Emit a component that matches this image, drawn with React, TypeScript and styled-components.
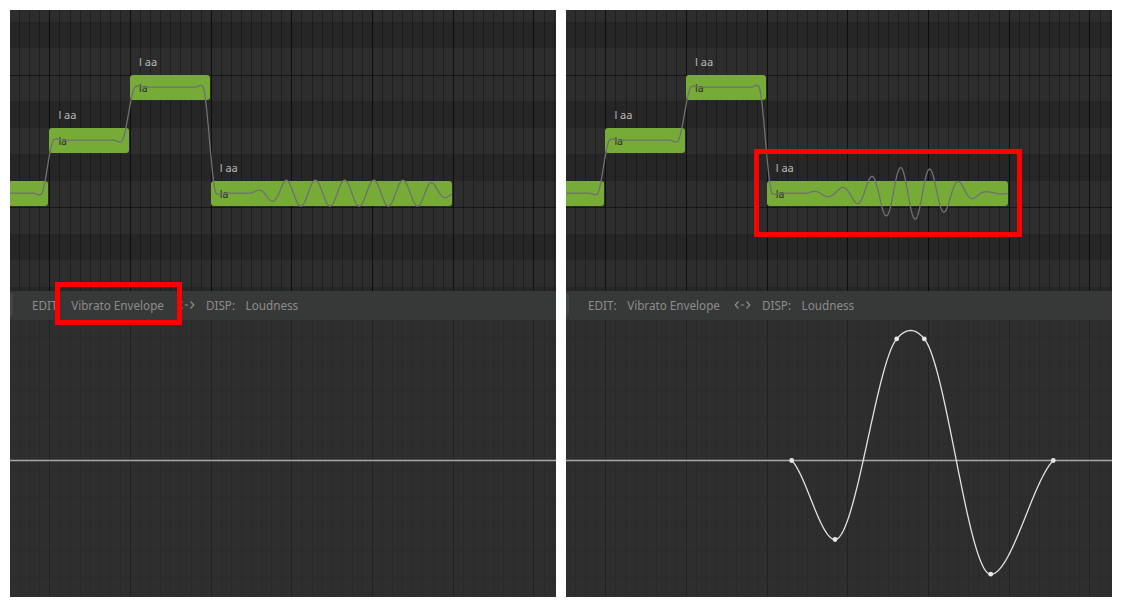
import React from "react";
import styled, { createGlobalStyle } from "styled-components";

const BEAT = 80.67;
const X0 = 39.4;
const MINOR = BEAT / 8;
const ROW_H = 26.5;
const FIRST_ROW_H = 11.7;

const GlobalStyle = createGlobalStyle`
  html, body { margin: 0; padding: 0; background: #ffffff; }
  body { font-family: "Noto Sans", "DejaVu Sans", sans-serif; }
`;

const Page = styled.div`
  display: flex;
  gap: 10px;
  padding: 10px;
  width: 1122px;
  height: 608px;
  box-sizing: border-box;
  background: #ffffff;
`;

const Panel = styled.section`
  position: relative;
  width: 546px;
  height: 587px;
  flex: none;
  display: flex;
  flex-direction: column;
  overflow: hidden;
  background: #2e2e2e;
`;

const Roll = styled.div`
  position: relative;
  height: 281px;
  flex: none;
  overflow: hidden;
`;

const Rows = styled.div`
  display: flex;
  flex-direction: column;
`;

const Row = styled.div<{ $dark?: boolean; $h: number; $octave?: boolean }>`
  height: ${(p) => p.$h}px;
  flex: none;
  box-sizing: border-box;
  background: ${(p) => (p.$dark ? "#262626" : "#2d2d2d")};
  border-top: ${(p) => (p.$octave ? "1px solid #161616" : "none")};
`;

const GridLines = styled.div<{ $major: string; $minor: string }>`
  position: absolute;
  inset: 0;
  pointer-events: none;
  background-image:
    repeating-linear-gradient(
      90deg,
      ${(p) => p.$major} ${X0 - BEAT}px,
      ${(p) => p.$major} ${X0 - BEAT + 1}px,
      transparent ${X0 - BEAT + 1}px,
      transparent ${X0}px
    ),
    repeating-linear-gradient(
      90deg,
      ${(p) => p.$minor} ${X0 - 4 * MINOR}px,
      ${(p) => p.$minor} ${X0 - 4 * MINOR + 1}px,
      transparent ${X0 - 4 * MINOR + 1}px,
      transparent ${X0 - 3 * MINOR}px
    );
`;

const Note = styled.div`
  position: absolute;
  height: 25px;
  box-sizing: border-box;
  padding: 2px 0 0 9px;
  background: #76ab37;
  border-radius: 3px;
  font-size: 10.5px;
  line-height: 23px;
  color: #2e2e2e;
  white-space: nowrap;
`;

const Lyric = styled.span`
  position: absolute;
  left: 9px;
  top: -19px;
  font-size: 11px;
  line-height: 12px;
  color: #b9b9b9;
  white-space: pre;
`;

const CurveLayer = styled.svg`
  position: absolute;
  left: 0;
  top: 0;
  pointer-events: none;
`;

const Toolbar = styled.div`
  height: 29px;
  flex: none;
  box-sizing: border-box;
  padding-bottom: 2px;
  display: flex;
  align-items: center;
  background: #373938;
  color: #8c8c8c;
  font-size: 11.7px;
  white-space: nowrap;
`;

const EdgeButton = styled.div`
  width: 3px;
  height: 23px;
  flex: none;
  margin-right: 19px;
  background: #434544;
  border-radius: 0 4px 4px 0;
`;

const Field = styled.div`
  display: flex;
  align-items: center;
  gap: 10.5px;
`;

const Swap = styled.svg`
  flex: none;
  margin: 0 11px 0 14px;
`;

const EnvelopePane = styled.div`
  position: relative;
  flex: 1;
  background-color: #2e2e2e;
  background-image: repeating-linear-gradient(
    180deg,
    rgba(0, 0, 0, 0.07) -9.97px,
    rgba(0, 0, 0, 0.07) -8.97px,
    transparent -8.97px,
    transparent 16.7px
  );
`;

const Highlight = styled.div<{ $x: number; $y: number; $w: number; $h: number }>`
  position: absolute;
  left: ${(p) => p.$x}px;
  top: ${(p) => p.$y}px;
  width: ${(p) => p.$w}px;
  height: ${(p) => p.$h}px;
  box-sizing: border-box;
  border: 5px solid #ff0000;
  pointer-events: none;
`;

/* ---------- data & math ---------- */

type RowDef = { dark?: boolean; octave?: boolean };
const ROWS: RowDef[] = [
  {}, // G (partial)
  { dark: true }, // F#
  {}, // F
  { octave: true }, // E
  { dark: true }, // D#
  {}, // D
  { dark: true }, // C#
  {}, // C
  { octave: true }, // B
  { dark: true }, // A#
  {}, // A
  { dark: true }, // G#
];

const rowTop = (i: number) => (i === 0 ? 0 : FIRST_ROW_H + (i - 1) * ROW_H);

const NOTES = [
  { beat: -1, dur: 1, row: 7, lyric: "", text: "" },
  { beat: 0, dur: 1, row: 5, lyric: "l aa", text: "la" },
  { beat: 1, dur: 1, row: 3, lyric: "l aa", text: "la" },
  { beat: 2, dur: 3, row: 7, lyric: "l aa", text: "la" },
];

const clamp = (v: number) => Math.max(0, Math.min(1, v));
const sstep = (x: number, a: number, b: number) => {
  const t = clamp((x - a) / (b - a));
  return t * t * (3 - 2 * t);
};
const gauss = (x: number, c: number, s: number) => Math.exp(-(((x - c) / s) ** 2));

const ENV_KNOTS: [number, number, number][] = [
  [225.7, 0, -1.0],
  [269, -79, 0],
  [330.7, 121.6, 1.2],
  [344.7, 130, 0],
  [358.3, 121.6, -1.2],
  [424.7, -113.7, 0],
  [487.3, 0, 1.0],
];

function envAt(x: number): number {
  const K = ENV_KNOTS;
  if (x <= K[0][0] || x >= K[K.length - 1][0]) return 0;
  for (let i = 0; i < K.length - 1; i++) {
    const [x0, y0, m0] = K[i];
    const [x1, y1, m1] = K[i + 1];
    if (x <= x1) {
      const h = x1 - x0;
      const t = (x - x0) / h;
      const t2 = t * t;
      const t3 = t2 * t;
      return (
        (2 * t3 - 3 * t2 + 1) * y0 +
        (t3 - 2 * t2 + t) * h * m0 +
        (-2 * t3 + 3 * t2) * y1 +
        (t3 - t2) * h * m1
      );
    }
  }
  return 0;
}

const center = (row: number) => rowTop(row) + 12.5;

function pitchY(x: number, modulated: boolean): number {
  const c7 = center(7);
  const c5 = center(5);
  const c3 = center(3);
  const trans: [number, number, number, number][] = [
    [37.5, 6.5, c7, c5],
    [118.5, 7, c5, c3],
    [199.5, 7, c3, c7],
  ];
  let y = c7;
  for (const [c, w, a, b] of trans) {
    const d = b - a;
    const sg = Math.sign(d);
    y += d * sstep(x, c - w, c + w);
    y += -sg * 1.8 * gauss(x, c - w - 2, 3);
    y += sg * 1.2 * gauss(x, c + w + 3, 3.5);
  }
  const v0 = 239.7;
  const P = 29.2;
  if (x > v0) {
    let A = 13 * clamp((x - v0) / 36) * clamp((446 - x) / 30);
    if (modulated) A *= Math.max(0, 1 + envAt(x) / 130);
    y -= A * Math.sin((2 * Math.PI * (x - v0)) / P);
  }
  return y;
}

function pitchPath(modulated: boolean): string {
  const pts: string[] = [];
  for (let x = 0; x <= 442; x += 0.5) {
    pts.push(`${x.toFixed(1)} ${pitchY(x, modulated).toFixed(2)}`);
  }
  return "M" + pts.join(" L");
}

const LINE_Y = 140.5;

function envPath(): string {
  const [a] = ENV_KNOTS[0];
  const [b] = ENV_KNOTS[ENV_KNOTS.length - 1];
  const pts: string[] = [];
  for (let x = a; x <= b + 0.01; x += 0.5) {
    pts.push(`${x.toFixed(1)} ${(LINE_Y - envAt(x)).toFixed(2)}`);
  }
  return "M" + pts.join(" L");
}

const ENV_DOTS = [0, 1, 2, 4, 5, 6].map((i) => ENV_KNOTS[i]);

/* ---------- components ---------- */

function PianoRoll({ modulated }: { modulated: boolean }) {
  return (
    <Roll>
      <Rows>
        {ROWS.map((r, i) => (
          <Row key={i} $h={i === 0 ? FIRST_ROW_H : ROW_H} $dark={r.dark} $octave={r.octave} />
        ))}
      </Rows>
      <GridLines $major="rgba(0,0,0,0.55)" $minor="rgba(0,0,0,0.3)" />
      {NOTES.map((n, i) => (
        <Note
          key={i}
          style={{
            left: X0 + n.beat * BEAT,
            top: rowTop(n.row),
            width: n.dur * BEAT - 1,
          }}
        >
          {n.lyric && <Lyric>{n.lyric}</Lyric>}
          {n.text}
        </Note>
      ))}
      <CurveLayer width={546} height={281} viewBox="0 0 546 281">
        <path d={pitchPath(modulated)} fill="none" stroke="#707070" strokeWidth={1.3} />
      </CurveLayer>
    </Roll>
  );
}

function ParamBar() {
  return (
    <Toolbar>
      <EdgeButton />
      <Field>
        <span>EDIT:</span>
        <span>Vibrato Envelope</span>
      </Field>
      <Swap width="17" height="10" viewBox="0 0 17 10">
        <path
          d="M4.5 1.5 L1.2 5 L4.5 8.5 M12.5 1.5 L15.8 5 L12.5 8.5 M6.8 5 H10.2"
          fill="none"
          stroke="#8c8c8c"
          strokeWidth={1.2}
        />
      </Swap>
      <Field>
        <span>DISP:</span>
        <span>Loudness</span>
      </Field>
    </Toolbar>
  );
}

function Envelope({ edited }: { edited: boolean }) {
  return (
    <EnvelopePane>
      <GridLines $major="rgba(0,0,0,0.18)" $minor="rgba(0,0,0,0.09)" />
      <CurveLayer width={546} height={277} viewBox="0 0 546 277">
        <line x1={0} x2={546} y1={LINE_Y} y2={LINE_Y} stroke="#a8a8a8" strokeWidth={1.5} />
        {edited && (
          <>
            <path d={envPath()} fill="none" stroke="#e2e2e2" strokeWidth={1.3} />
            {ENV_DOTS.map(([x, v], i) => (
              <circle key={i} cx={x} cy={LINE_Y - v} r={2.4} fill="#e6e6e6" />
            ))}
          </>
        )}
      </CurveLayer>
    </EnvelopePane>
  );
}

export default function App() {
  return (
    <>
      <GlobalStyle />
      <Page>
        <Panel>
          <PianoRoll modulated={false} />
          <ParamBar />
          <Envelope edited={false} />
          <Highlight $x={45} $y={271.7} $w={126.7} $h={43.3} />
        </Panel>
        <Panel>
          <PianoRoll modulated={true} />
          <ParamBar />
          <Envelope edited={true} />
          <Highlight $x={188} $y={139.3} $w={267.7} $h={87.4} />
        </Panel>
      </Page>
    </>
  );
}
